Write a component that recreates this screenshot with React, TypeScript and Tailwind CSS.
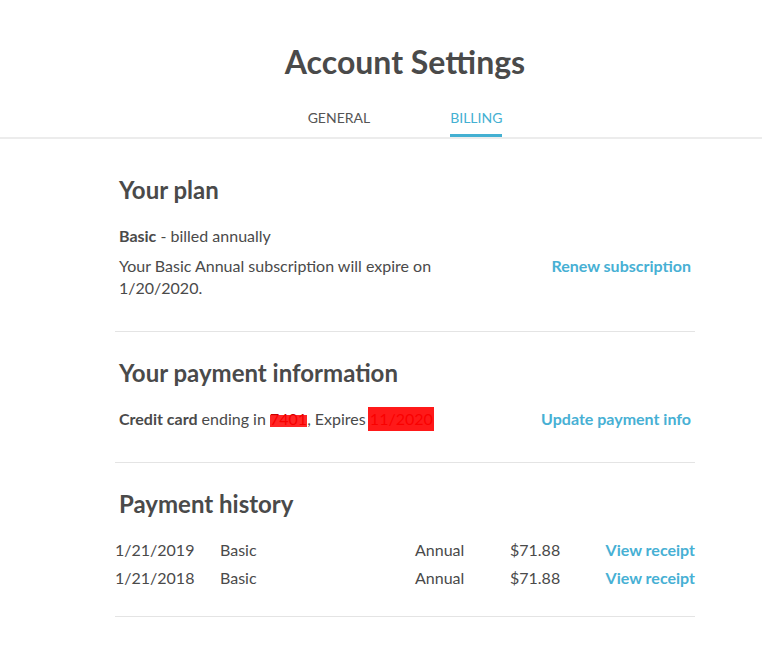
import React from "react";

const rows = [
  { date: "1/21/2019", plan: "Basic", period: "Annual", amount: "$71.88" },
  { date: "1/21/2018", plan: "Basic", period: "Annual", amount: "$71.88" },
];

function Section({ title, children }: { title: string; children: React.ReactNode }) {
  return (
    <section className="border-b border-[#e4e4e4] pt-[25px] pb-8">
      <h2 className="px-1 text-[24px] leading-[32px] font-bold mb-[19px]">{title}</h2>
      {children}
    </section>
  );
}

export default function App() {
  return (
    <div className="min-h-screen bg-white font-['Lato','Noto_Sans',sans-serif] text-[#4a4a4a]">
      <header className="border-b-2 border-[#ececec]">
        <div className="pl-[48px]">
          <h1 className="pt-[42px] text-center text-[32px] leading-[40px] font-bold">Account Settings</h1>
          <nav className="mt-[26px] flex justify-center gap-[80px] text-[14px] leading-[20px]">
            <a className="pb-[6px] border-b-[3px] border-transparent text-[#555555] cursor-pointer">GENERAL</a>
            <a className="pb-[6px] border-b-[3px] border-[#44b0d2] text-[#44b0d2] cursor-pointer">BILLING</a>
          </nav>
        </div>
      </header>

      <main className="pl-[48px]">
        <div className="mx-auto w-[580px] mt-[10px] text-[16px] leading-[22px]">
          <Section title="Your plan">
            <div className="px-1">
              <p>
                <span className="font-bold">Basic</span> - billed annually
              </p>
              <div className="mt-2 flex items-start justify-between">
                <p className="w-[330px]">Your Basic Annual subscription will expire on 1/20/2020.</p>
                <a className="font-bold text-[#47b0d4] cursor-pointer">Renew subscription</a>
              </div>
            </div>
          </Section>

          <Section title="Your payment information">
            <div className="px-1 flex items-start justify-between">
              <p>
                <span className="font-bold">Credit card</span> ending in{" "}
                <span className="relative text-[#c80000]">
                  7401
                  <span className="absolute left-0 right-0 top-[6px] h-[12px] bg-[#ff0000]/85" />
                </span>
                , Expires{" "}
                <span className="relative text-[#c80000]">
                  11/2020
                  <span className="absolute -left-[2px] -right-[1px] -top-[2px] h-[24px] bg-[#ff0000]/90" />
                </span>
              </p>
              <a className="font-bold text-[#47b0d4] cursor-pointer">Update payment info</a>
            </div>
          </Section>

          <section className="border-b border-[#e4e4e4] pt-[25px] pb-6">
            <h2 className="px-1 text-[24px] leading-[32px] font-bold mb-[16px]">Payment history</h2>
            <div>
              {rows.map((r) => (
                <div key={r.date} className="grid grid-cols-[105px_195px_95px_95px_1fr] h-[28px] items-center">
                  <span>{r.date}</span>
                  <span>{r.plan}</span>
                  <span>{r.period}</span>
                  <span>{r.amount}</span>
                  <a className="text-right font-bold text-[#47b0d4] cursor-pointer">View receipt</a>
                </div>
              ))}
            </div>
          </section>
        </div>
      </main>
    </div>
  );
}
